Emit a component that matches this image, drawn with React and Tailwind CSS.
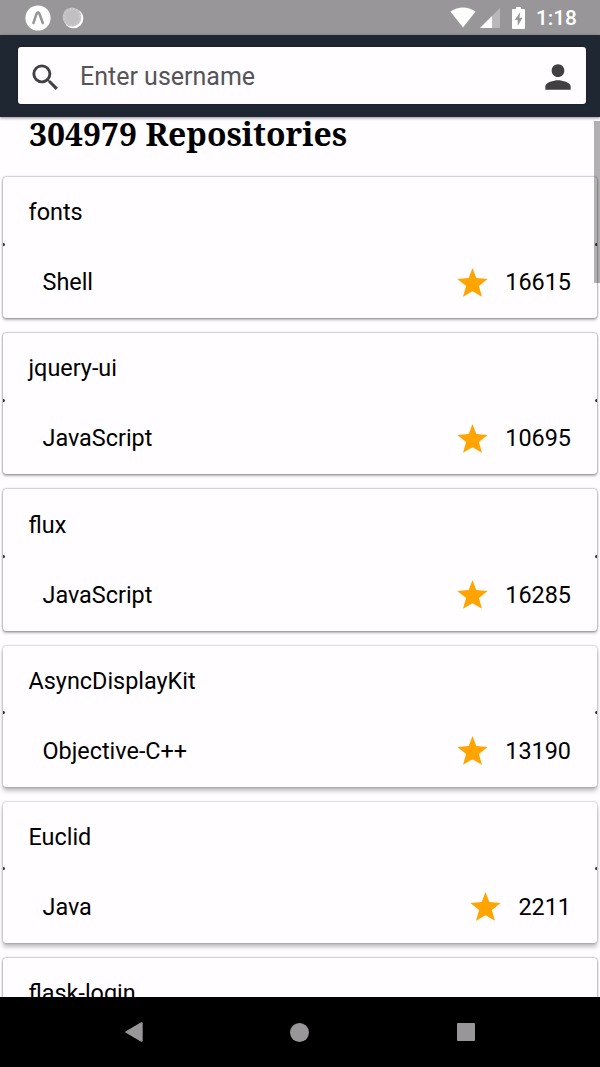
import React from "react";
import { MdSearch, MdPerson } from "react-icons/md";

const repositories = [
  { name: "fonts", language: "Shell", stars: 16615 },
  { name: "jquery-ui", language: "JavaScript", stars: 10695 },
  { name: "flux", language: "JavaScript", stars: 16285 },
  { name: "AsyncDisplayKit", language: "Objective-C++", stars: 13190, raised: true },
  { name: "Euclid", language: "Java", stars: 2211, raised: true },
  { name: "flask-login" },
];

function StatusBar() {
  return (
    <header className="flex h-[35px] shrink-0 items-center bg-[#989698] pl-[25px] pr-[22px] text-white">
      <svg className="h-[26px] w-[26px]" viewBox="0 0 26 26">
        <circle cx="13" cy="13" r="12.6" fill="white" />
        <path d="M8.4 18 L11.8 8.2 Q13 6.6 14.2 8.2 L17.8 18" fill="none" stroke="#989698" strokeWidth="2.5" strokeLinecap="round" />
      </svg>
      <svg className="ml-[11px] h-[22px] w-[22px]" viewBox="0 0 22 22">
        <circle cx="11.5" cy="11.5" r="9.8" fill="white" />
        <circle cx="10" cy="10" r="9.4" fill="#c1bfc1" />
        <circle cx="10" cy="10" r="8" fill="none" stroke="#d0ced0" strokeWidth="2.2" strokeDasharray="1.2 2" />
      </svg>
      <svg className="ml-auto h-[21px] w-[26px]" viewBox="0 0 26 21">
        <path d="M0.4 4.6 Q13 -3.8 25.6 4.6 L13 20.4 Z" fill="white" />
      </svg>
      <svg className="ml-[4px] mt-px h-[20px] w-[20px]" viewBox="0 0 20 20">
        <path d="M20 0 V20 H0 Z" fill="#b9b7b9" />
        <path d="M12 8 V20 H0 Z" fill="white" />
      </svg>
      <svg className="ml-[12px] h-[22px] w-[13px]" viewBox="0 0 13 22">
        <path d="M4 0 H9 V2 H12 Q13 2 13 3 V21 Q13 22 12 22 H1 Q0 22 0 21 V3 Q0 2 1 2 H4 Z" fill="white" />
        <path d="M8.3 5 L2.7 13 H5.7 V19 L10.5 10.8 H7.4 Z" fill="#989698" />
      </svg>
      <span className="ml-[11px] mt-[2px] w-[42px] text-[20.8px] leading-none font-medium">1:18</span>
    </header>
  );
}

function SearchBar() {
  return (
    <div className="z-10 flex h-[82px] shrink-0 bg-[#1f2733] pt-[12px] pr-[14.5px] pb-[13px] pl-[17.5px] shadow-[0_1px_3px_rgba(0,0,0,0.45)]">
      <div className="flex w-full items-center rounded-[3px] bg-[#fffdff] pr-[8.5px] pl-[10px] text-[#413f42] shadow-[0_0_2px_rgba(0,0,0,0.5)]">
        <MdSearch className="mt-[3px] h-[35px] w-[35px] shrink-0" />
        <span className="mt-[2px] ml-[17.5px] flex-1 text-[25px] leading-none text-[#565457]">Enter username</span>
        <MdPerson className="mt-[2px] h-[38px] w-[38px] shrink-0" />
      </div>
    </div>
  );
}

function StarIcon() {
  return (
    <svg className="mt-px ml-auto h-[29px] w-[31px]" viewBox="0 0 31 29">
      <path
        d="M15.5 0 L19.3 10.1 L30.7 10.9 L21.9 18 L25 28.8 L15.5 23.2 L6 28.8 L9.1 18 L0.3 10.9 L11.7 10.1 Z"
        fill="#ffa400"
      />
    </svg>
  );
}

function RepositoryCard({ name, language, stars, raised }) {
  const shadow = raised
    ? "shadow-[0_4px_4px_rgba(0,0,0,0.25),0_0_2px_rgba(0,0,0,0.45)]"
    : "shadow-[0_2px_3px_rgba(0,0,0,0.28),0_0_2px_rgba(0,0,0,0.6)]";
  return (
    <article className={`relative h-[141.2px] shrink-0 rounded-[3px] bg-[#fffdff] ${shadow}`}>
      <div className="flex h-[67px] items-center pl-[25.5px]">
        <h2 className="mt-[5px] leading-none">{name}</h2>
      </div>
      <span className="absolute top-[65.5px] left-0 h-[3px] w-[2px] rounded-r-full bg-[#333]" />
      <span className="absolute top-[65.5px] right-0 h-[3px] w-[2px] rounded-l-full bg-[#333]" />
      {language && (
        <div className="flex h-[75px] items-center pr-[25.5px] pl-[39.5px]">
          <span className="mt-[3px] leading-none">{language}</span>
          <StarIcon />
          <span className="mt-[3px] ml-[17px] leading-none">{stars}</span>
        </div>
      )}
    </article>
  );
}

function NavigationBar() {
  return (
    <nav className="flex h-[70px] shrink-0 items-center justify-between bg-black pr-[125.5px] pl-[124.5px] text-[#989698]">
      <svg className="h-[20px] w-[18px]" viewBox="0 0 18 20">
        <path d="M16.2 .3 Q17.7 -.2 17.7 1.5 V18.5 Q17.7 20.2 16.2 19.7 L.8 10.8 Q0 10 .8 9.2 Z" fill="currentColor" />
      </svg>
      <span className="h-[19px] w-[19px] rounded-full bg-current" />
      <span className="h-[18px] w-[18px] rounded-[1px] bg-current" />
    </nav>
  );
}

export default function App() {
  return (
    <div className="flex h-[1067px] w-[600px] flex-col overflow-hidden bg-[#fffdff] font-['Roboto',sans-serif] text-[23.4px] text-black">
      <StatusBar />
      <SearchBar />
      <main className="relative flex min-h-0 flex-1 flex-col overflow-hidden">
        <h1 className="h-[60px] shrink-0 pl-[29px] font-['Noto_Serif','DejaVu_Serif_Condensed','DejaVu_Serif',serif] text-[31.9px] leading-[33px] font-bold whitespace-nowrap">
          304979 Repositories
        </h1>
        <div className="flex flex-col gap-[15px] pr-[3.5px] pl-[3px]">
          {repositories.map((repo) => (
            <RepositoryCard key={repo.name} {...repo} />
          ))}
        </div>
        <div className="absolute top-[4px] right-0 h-[162px] w-[6px] bg-black/30" />
      </main>
      <NavigationBar />
    </div>
  );
}
